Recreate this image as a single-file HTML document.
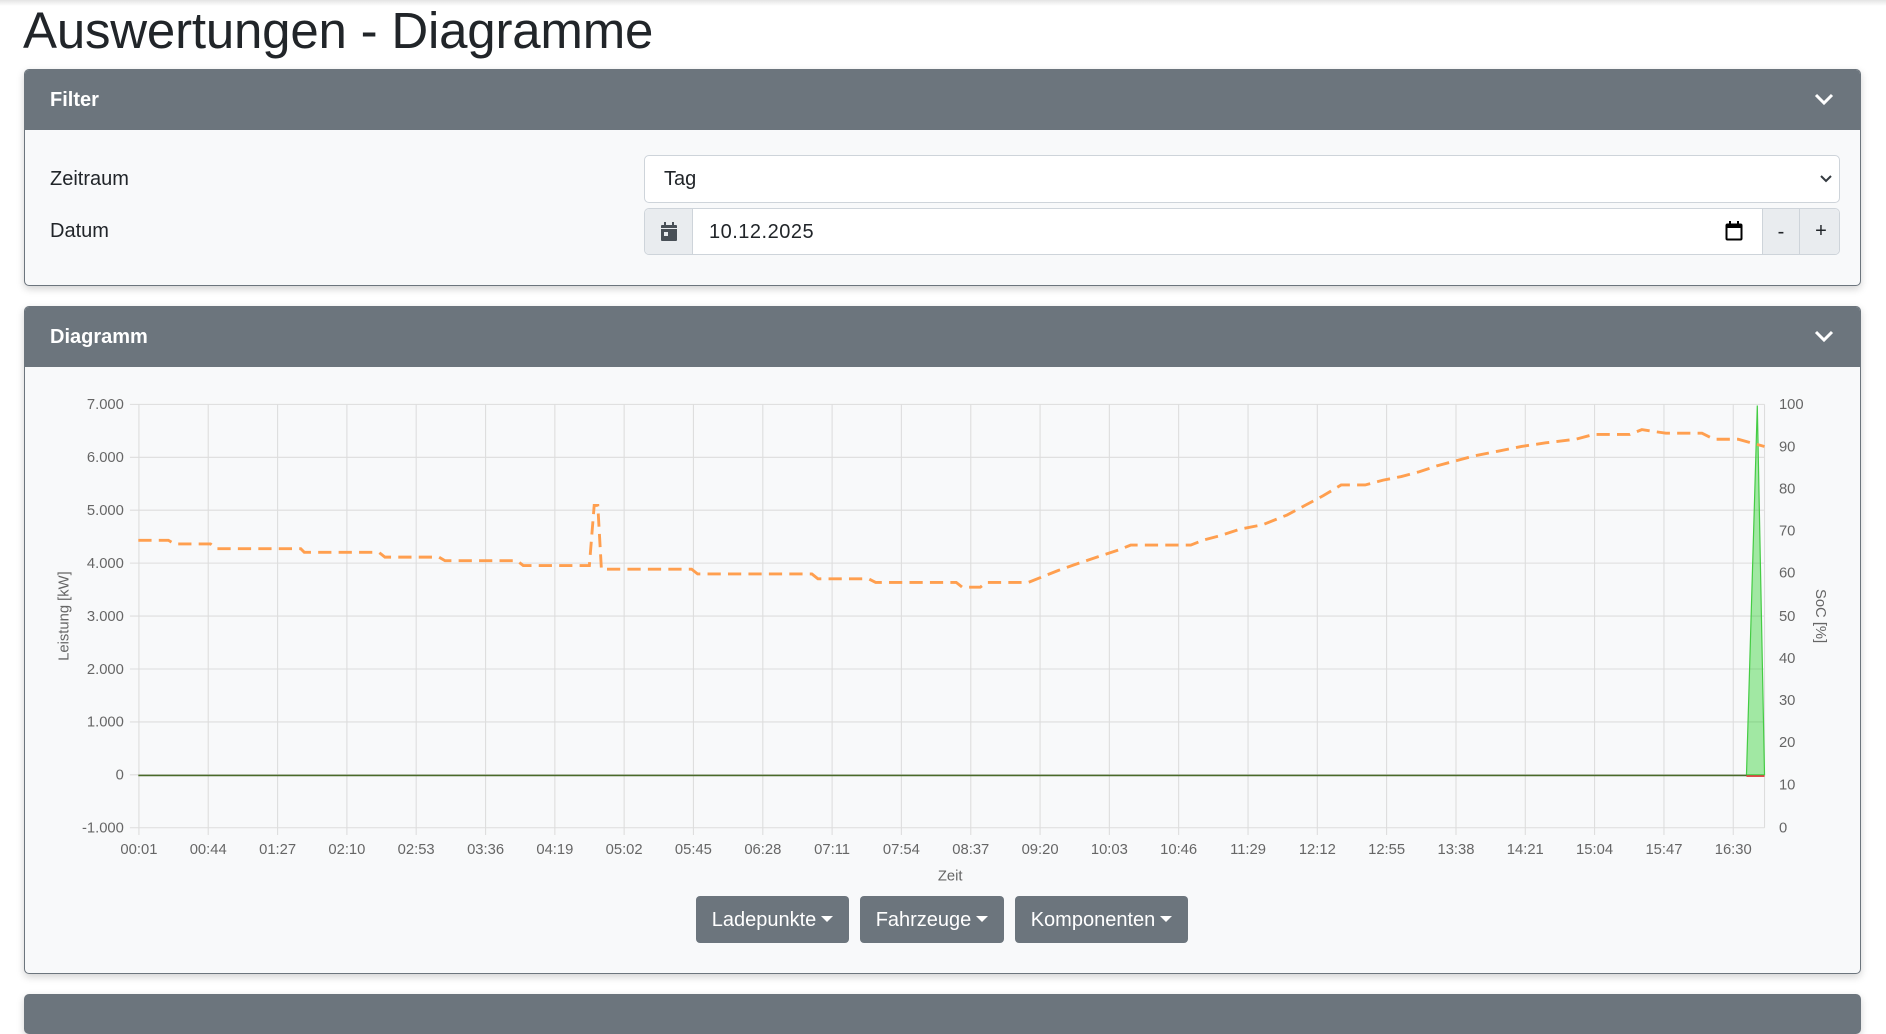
<!DOCTYPE html>
<html><head><meta charset="utf-8"><style>
*{box-sizing:border-box;margin:0;padding:0}
body{width:1886px;height:1006px;overflow:hidden;background:#fff;font-family:"Liberation Sans",sans-serif;color:#212529;position:relative}
.topshadow{position:absolute;left:0;top:0;width:1886px;height:6px;background:linear-gradient(#e4e4e4,#fff)}
h1{position:absolute;left:23px;top:1px;font-size:51px;font-weight:400;letter-spacing:-0.2px}
.card{position:absolute;left:24px;width:1837px;border:1px solid #6c757d;border-radius:5px;background:#f8f9fa;box-shadow:0 3px 8px rgba(0,0,0,.18);overflow:hidden}
.hdr{height:60px;background:#6c757d;color:#fff;font-weight:700;font-size:20px;padding:19px 0 0 25px;position:relative}
.chev{position:absolute;right:26px;top:22px}
.lbl{position:absolute;left:50px;font-size:20px}
.ctl{position:absolute;background:#fff;border:1px solid #ced4da;border-radius:5px;font-size:20px}
.btn{position:absolute;top:896px;height:47px;background:#6c757d;color:#fff;border-radius:4px;font-size:20px;padding-top:13px;text-align:center}
.car{display:inline-block;width:0;height:0;border-left:6px solid transparent;border-right:6px solid transparent;border-top:6px solid #fff;vertical-align:4px;margin-left:5px}
</style></head><body>
<div class="topshadow"></div>
<h1>Auswertungen - Diagramme</h1>

<div class="card" style="top:69px;height:217px">
 <div class="hdr">Filter<svg class="chev" width="20" height="14" viewBox="0 0 20 14"><path d="M2 3l8 8 8-8" stroke="#fff" stroke-width="3" fill="none"/></svg></div>
</div>
<div class="lbl" style="top:168px">Zeitraum</div>
<div class="lbl" style="top:220px">Datum</div>
<div class="ctl" style="left:644px;top:155px;width:1196px;height:48px;padding:12px 0 0 19px">Tag
 <svg style="position:absolute;right:6px;top:18px" width="14" height="10" viewBox="0 0 14 10"><path d="M2 2l5 5 5-5" stroke="#343a40" stroke-width="2" fill="none"/></svg></div>
<div class="ctl" style="left:644px;top:208px;width:1196px;height:47px;overflow:hidden">
 <div style="position:absolute;left:0;top:0;width:48px;height:47px;background:#e9ecef;border-right:1px solid #ced4da">
  <svg style="position:absolute;left:16px;top:13px" width="16" height="19" viewBox="0 0 16 19"><rect x="3" y="0" width="2" height="4" fill="#495057"/><rect x="11" y="0" width="2" height="4" fill="#495057"/><rect x="0" y="3" width="16" height="16" rx="1" fill="#495057"/><rect x="0" y="6" width="16" height="1" fill="#e9ecef"/><rect x="3" y="10" width="4" height="4" fill="#e9ecef"/></svg></div>
 <div style="position:absolute;left:64px;top:12px;letter-spacing:.5px">10.12.2025</div>
 <svg style="position:absolute;left:1080px;top:12px" width="18" height="20" viewBox="0 0 18 20"><rect x="1.5" y="3.5" width="15" height="15" rx="1" stroke="#000" stroke-width="2" fill="none"/><rect x="1" y="3" width="16" height="4" fill="#000"/><rect x="4" y="0" width="2" height="4" fill="#000"/><rect x="12" y="0" width="2" height="4" fill="#000"/></svg>
 <div style="position:absolute;left:1117px;top:0;width:79px;height:47px;background:#e9ecef;border-left:1px solid #ced4da">
  <div style="position:absolute;left:0;top:0;width:37px;height:47px;border-right:1px solid #ced4da;text-align:center;padding-top:12px">-</div>
  <div style="position:absolute;left:37px;top:0;width:42px;height:47px;text-align:center;padding-top:11px">+</div>
 </div>
</div>

<div class="card" style="top:306px;height:668px">
 <div class="hdr">Diagramm<svg class="chev" width="20" height="14" viewBox="0 0 20 14"><path d="M2 3l8 8 8-8" stroke="#fff" stroke-width="3" fill="none"/></svg></div>
</div>
<div class="card" style="top:994px;height:40px;background:#6c757d"></div>

<svg style="position:absolute;left:0;top:0" width="1886" height="1006" viewBox="0 0 1568 836" font-family="Liberation Sans, sans-serif" font-size="12.3" fill="#666">
 <g stroke="#ddd" stroke-width="0.9">
  <line x1="108" y1="336" x2="1467" y2="336"/><line x1="108" y1="380" x2="1467" y2="380"/><line x1="108" y1="424" x2="1467" y2="424"/><line x1="108" y1="468" x2="1467" y2="468"/><line x1="108" y1="512" x2="1467" y2="512"/><line x1="108" y1="556" x2="1467" y2="556"/><line x1="108" y1="600" x2="1467" y2="600"/><line x1="108" y1="644" x2="1467" y2="644"/><line x1="108" y1="688" x2="1467" y2="688"/>
  <line x1="1467" y1="336" x2="1467" y2="688"/>
  <line x1="115.5" y1="336" x2="115.5" y2="694"/><line x1="173.1" y1="336" x2="173.1" y2="694"/><line x1="230.8" y1="336" x2="230.8" y2="694"/><line x1="288.4" y1="336" x2="288.4" y2="694"/><line x1="346" y1="336" x2="346" y2="694"/><line x1="403.7" y1="336" x2="403.7" y2="694"/><line x1="461.3" y1="336" x2="461.3" y2="694"/><line x1="518.9" y1="336" x2="518.9" y2="694"/><line x1="576.5" y1="336" x2="576.5" y2="694"/><line x1="634.2" y1="336" x2="634.2" y2="694"/><line x1="691.8" y1="336" x2="691.8" y2="694"/><line x1="749.4" y1="336" x2="749.4" y2="694"/><line x1="807.1" y1="336" x2="807.1" y2="694"/><line x1="864.7" y1="336" x2="864.7" y2="694"/><line x1="922.3" y1="336" x2="922.3" y2="694"/><line x1="979.9" y1="336" x2="979.9" y2="694"/><line x1="1037.6" y1="336" x2="1037.6" y2="694"/><line x1="1095.2" y1="336" x2="1095.2" y2="694"/><line x1="1152.8" y1="336" x2="1152.8" y2="694"/><line x1="1210.5" y1="336" x2="1210.5" y2="694"/><line x1="1268.1" y1="336" x2="1268.1" y2="694"/><line x1="1325.7" y1="336" x2="1325.7" y2="694"/><line x1="1383.4" y1="336" x2="1383.4" y2="694"/><line x1="1441" y1="336" x2="1441" y2="694"/>
 </g>
 <g text-anchor="middle">
  <text x="115.5" y="710">00:01</text><text x="173.1" y="710">00:44</text><text x="230.8" y="710">01:27</text><text x="288.4" y="710">02:10</text><text x="346" y="710">02:53</text><text x="403.7" y="710">03:36</text><text x="461.3" y="710">04:19</text><text x="518.9" y="710">05:02</text><text x="576.5" y="710">05:45</text><text x="634.2" y="710">06:28</text><text x="691.8" y="710">07:11</text><text x="749.4" y="710">07:54</text><text x="807.1" y="710">08:37</text><text x="864.7" y="710">09:20</text><text x="922.3" y="710">10:03</text><text x="979.9" y="710">10:46</text><text x="1037.6" y="710">11:29</text><text x="1095.2" y="710">12:12</text><text x="1152.8" y="710">12:55</text><text x="1210.5" y="710">13:38</text><text x="1268.1" y="710">14:21</text><text x="1325.7" y="710">15:04</text><text x="1383.4" y="710">15:47</text><text x="1441" y="710">16:30</text>
 </g>
 <g text-anchor="end">
  <text x="103" y="340">7.000</text><text x="103" y="384">6.000</text><text x="103" y="428">5.000</text><text x="103" y="472">4.000</text><text x="103" y="516">3.000</text><text x="103" y="560">2.000</text><text x="103" y="604">1.000</text><text x="103" y="648">0</text><text x="103" y="692">-1.000</text>
 </g>
 <g>
  <text x="1479" y="340">100</text><text x="1479" y="375">90</text><text x="1479" y="410">80</text><text x="1479" y="445">70</text><text x="1479" y="480">60</text><text x="1479" y="516">50</text><text x="1479" y="551">40</text><text x="1479" y="586">30</text><text x="1479" y="621">20</text><text x="1479" y="656">10</text><text x="1479" y="692">0</text>
 </g>
 <text x="790" y="732" text-anchor="middle">Zeit</text>
 <text transform="translate(57,512) rotate(-90)" text-anchor="middle">Leistung [kW]</text>
 <text transform="translate(1510,512) rotate(90)" text-anchor="middle">SoC [%]</text>
 <path d="M1452 644 L1461 337 L1467 644 Z" fill="rgba(0,200,0,.35)" stroke="#4c4" stroke-width="1"/>
 <line x1="115" y1="644.5" x2="1452" y2="644.5" stroke="#4a6a2a" stroke-width="1.3"/>
 <line x1="1452" y1="645" x2="1467" y2="645" stroke="#d33" stroke-width="1.3"/>
 <path fill="none" stroke="#ff9f4f" stroke-width="2.4" stroke-dasharray="11,6" d="M115 449 L140 449 L145 452 L175 452 L180 456 L250 456 L253 459 L315 459 L320 463 L365 463 L370 466 L430 466 L435 470 L490 470 L494 420 L497 420 L500 473 L575 473 L580 477 L675 477 L680 481 L722 481 L728 484 L795 484 L800 488 L815 488 L820 484 L855 484 L865 480 L880 474 L900 467 L915 462 L930 457 L940 453 L990 453 L1000 449 L1015 445 L1030 440 L1050 436 L1070 428 L1085 420 L1100 412 L1115 403 L1135 403 L1150 399 L1165 396 L1180 392 L1195 387 L1210 383 L1225 379 L1245 375 L1265 371 L1285 368 L1310 365 L1325 361 L1355 361 L1365 357 L1385 360 L1415 360 L1425 365 L1445 365 L1467 371"/>
</svg>

<div class="btn" style="left:696px;width:153px">Ladepunkte<span class="car"></span></div>
<div class="btn" style="left:860px;width:144px">Fahrzeuge<span class="car"></span></div>
<div class="btn" style="left:1015px;width:173px">Komponenten<span class="car"></span></div>
</body></html>
